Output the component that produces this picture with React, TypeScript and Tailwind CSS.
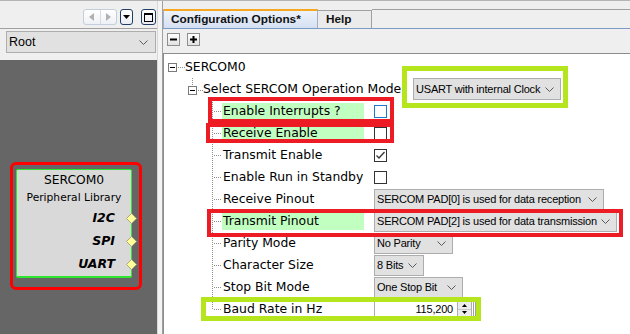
import React from "react";

const DD = "font-['Liberation_Sans',Arial,sans-serif] text-[11px] tracking-[-0.2px] text-black";

function Chevron() {
  return (
    <svg width="9" height="5" viewBox="0 0 9 5" className="shrink-0">
      <polyline points="0.5,0.5 4.5,4.5 8.5,0.5" fill="none" stroke="#5a5a5a" strokeWidth="1" />
    </svg>
  );
}

function Dropdown({ text, className = "" }: { text: string; className?: string }) {
  return (
    <div
      className={`flex h-[21px] shrink-0 items-center justify-between border border-[#adadad] bg-[#e1e1e1] pl-[2px] pr-[6px] ${DD} ${className}`}
    >
      <span className="whitespace-nowrap">{text}</span>
      <Chevron />
    </div>
  );
}

function Checkbox({ checked, focus }: { checked?: boolean; focus?: boolean }) {
  return (
    <div
      className={`flex h-[13px] w-[13px] shrink-0 items-center justify-center border bg-white ${
        focus ? "border-[#1c79d0]" : "border-[#333333]"
      }`}
    >
      {checked && (
        <svg width="11" height="11" viewBox="0 0 11 11">
          <polyline points="1.5,5.5 4,8 9.5,2" fill="none" stroke="#333333" strokeWidth="1.3" />
        </svg>
      )}
    </div>
  );
}

function LeafGutter({ last }: { last?: boolean }) {
  return (
    <svg width="58" height="22" className="shrink-0">
      <line x1="48.5" y1="0" x2="48.5" y2={last ? 12 : 22} stroke="#8f8f8f" strokeDasharray="1 1" />
      <line x1="50" y1="11.5" x2="58" y2="11.5" stroke="#8f8f8f" strokeDasharray="1 1" />
    </svg>
  );
}

function LeafRow({
  label,
  hl,
  last,
  children,
}: {
  label: string;
  hl?: boolean;
  last?: boolean;
  children?: React.ReactNode;
}) {
  return (
    <div className="flex h-[22px] items-center">
      <LeafGutter last={last} />
      <div className="flex w-[152px] shrink-0 items-center">
        <span
          className={`flex h-[17px] items-center whitespace-nowrap pl-[1px] ${
            hl ? "w-[142px] bg-[#c0ffc0]" : ""
          }`}
        >
          {label}
        </span>
      </div>
      {children}
    </div>
  );
}

function Spinner() {
  return (
    <div className="flex h-[16px] w-[15px] shrink-0 flex-col border border-[#adadad] bg-[#ececec]">
      <div className="flex flex-1 items-center justify-center border-b border-[#c8c8c8]">
        <svg width="5" height="3" viewBox="0 0 5 3">
          <polygon points="2.5,0 5,3 0,3" fill="#000" />
        </svg>
      </div>
      <div className="flex flex-1 items-center justify-center">
        <svg width="5" height="3" viewBox="0 0 5 3">
          <polygon points="0,0 5,0 2.5,3" fill="#000" />
        </svg>
      </div>
    </div>
  );
}

function Diamond() {
  return (
    <svg width="11" height="11" viewBox="0 0 11 11" className="ml-[11px] mr-[-6px] shrink-0">
      <polygon points="5.5,0.5 10.5,5.5 5.5,10.5 0.5,5.5" fill="#ffff99" stroke="#a8a878" strokeWidth="1" />
    </svg>
  );
}

export default function App() {
  return (
    <div className="relative flex h-[334px] w-[630px] flex-col overflow-hidden bg-[#efefef] font-['DejaVu_Sans',sans-serif] text-[12.4px] text-black">
      <div className="h-[1px] bg-[#b4b4b4]" />
      <div className="flex h-[333px]">
        {/* Left panel */}
        <div className="flex w-[157px] shrink-0 flex-col">
          <div className="flex h-[27px] items-start justify-end bg-[#efefef] pr-[1px] pt-[8px]">
            <div className="mr-[3px] flex h-[16px] w-[34px] rounded-[3px] border border-[#c3cedd] bg-gradient-to-b from-white to-[#eef1f5]">
              <div className="flex flex-1 items-center justify-center border-r border-[#d4dbe5]">
                <svg width="5" height="8" viewBox="0 0 5 8">
                  <polygon points="5,0 5,8 0,4" fill="#b0b0b0" />
                </svg>
              </div>
              <div className="flex flex-1 items-center justify-center">
                <svg width="5" height="8" viewBox="0 0 5 8">
                  <polygon points="0,0 0,8 5,4" fill="#b0b0b0" />
                </svg>
              </div>
            </div>
            <div className="mr-[8px] flex h-[16px] w-[13px] items-center justify-center rounded-[3px] border border-[#1f3f66] bg-gradient-to-b from-white to-[#e9edf2]">
              <svg width="7" height="4" viewBox="0 0 7 4">
                <polygon points="0,0 7,0 3.5,4" fill="#000" />
              </svg>
            </div>
            <div className="flex h-[16px] w-[15px] items-center justify-center rounded-[3px] border border-[#1f3f66] bg-gradient-to-b from-white to-[#e9edf2]">
              <svg width="9" height="9" viewBox="0 0 9 9">
                <rect x="0.5" y="0.5" width="8" height="8" fill="none" stroke="#000" strokeWidth="1" />
                <line x1="0" y1="1.5" x2="9" y2="1.5" stroke="#000" strokeWidth="1" />
              </svg>
            </div>
          </div>
          <div className="h-[1px] bg-[#a0a0a0]" />
          <div className="h-[31px] bg-[#efefef] pl-[6px] pr-[1px] pt-[2px]">
            <div className="flex h-[22px] items-center justify-between border border-[#adadad] bg-[#e1e1e1] pl-[2px] pr-[7px] font-['Liberation_Sans',Arial,sans-serif] text-[12.5px]">
              <span>Root</span>
              <Chevron />
            </div>
          </div>
          <div className="flex-1 bg-[#666666] pl-[10px] pt-[102px]">
            <div className="h-[128px] w-[132px] rounded-[6px] border-[3px] border-[#ff0000] pl-[3px] pt-[4px]">
              <div className="flex h-[109px] w-[116px] flex-col rounded-[2px] border border-b-2 border-[#2ee62e] bg-[#d9d9d9]">
                <div className="flex h-[20px] items-center justify-center text-[12.3px]">SERCOM0</div>
                <div className="flex h-[17px] items-center justify-center text-[10.7px]">Peripheral Library</div>
                {["I2C", "SPI", "UART"].map((p) => (
                  <div key={p} className="flex h-[23px] items-center justify-end">
                    <span className="text-[12.5px] font-bold italic">{p}</span>
                    <Diamond />
                  </div>
                ))}
              </div>
            </div>
          </div>
        </div>

        {/* Splitter */}
        <div className="w-[6px] shrink-0 border-l border-r border-l-[#d8d8d8] border-r-[#a0a0a0] bg-[#f4f4f4]" />

        {/* Right panel */}
        <div className="flex min-w-0 flex-1 flex-col">
          <div className="h-[8px] bg-[#efefef]" />
          <div className="flex h-[19px] bg-[#efefef]">
            <div className="flex w-[155px] shrink-0 items-center border-x border-t-2 border-x-[#9fb0c8] border-t-[#f7a823] bg-gradient-to-b from-[#eef3fb] to-[#d4e0f2] pl-[7px] font-['Liberation_Sans',Arial,sans-serif] text-[11.8px] font-bold text-[#111]">
              Configuration Options*
            </div>
            <div className="mt-[1px] flex w-[54px] shrink-0 items-center border-r border-t border-[#a0a0a0] bg-[#ebebeb] pl-[8px] font-['Liberation_Sans',Arial,sans-serif] text-[11.8px] font-bold text-[#111]">
              Help
            </div>
            <div className="flex-1 border-t border-[#a0a0a0]" />
          </div>
          <div className="h-[1px] bg-[#7a9cc6]" />
          <div className="flex h-[24px] items-start gap-[7px] bg-[#efefef] pl-[4px] pt-[4px]">
            <div className="flex h-[13px] w-[13px] items-center justify-center border border-[#8e8e8e] bg-gradient-to-b from-white to-[#e2e2e2]">
              <svg width="7" height="7" viewBox="0 0 7 7">
                <rect x="0" y="2.5" width="7" height="2" fill="#000" />
              </svg>
            </div>
            <div className="flex h-[13px] w-[13px] items-center justify-center border border-[#8e8e8e] bg-gradient-to-b from-white to-[#e2e2e2]">
              <svg width="7" height="7" viewBox="0 0 7 7">
                <rect x="0" y="2.5" width="7" height="2" fill="#000" />
                <rect x="2.5" y="0" width="2" height="7" fill="#000" />
              </svg>
            </div>
          </div>
          <div className="flex-1 border-l border-t border-[#8c8c8c] bg-white pt-[2px]">
            {/* SERCOM0 */}
            <div className="flex h-[22px] items-center">
              <svg width="21" height="22" className="shrink-0">
                <rect x="4.5" y="7.5" width="8" height="8" fill="#fff" stroke="#7a7a7a" />
                <line x1="6" y1="11.5" x2="11" y2="11.5" stroke="#000" />
                <line x1="14" y1="11.5" x2="21" y2="11.5" stroke="#8f8f8f" strokeDasharray="1 1" />
              </svg>
              <span className="whitespace-nowrap">SERCOM0</span>
            </div>
            {/* Select mode */}
            <div className="flex h-[22px] items-center">
              <svg width="39" height="22" className="shrink-0">
                <line x1="28.5" y1="0" x2="28.5" y2="8" stroke="#8f8f8f" strokeDasharray="1 1" />
                <rect x="24.5" y="8.5" width="8" height="8" fill="#fff" stroke="#7a7a7a" />
                <line x1="26" y1="12.5" x2="31" y2="12.5" stroke="#000" />
                <line x1="34" y1="12.5" x2="39" y2="12.5" stroke="#8f8f8f" strokeDasharray="1 1" />
              </svg>
              <span className="w-[210px] shrink-0 whitespace-nowrap">Select SERCOM Operation Mode</span>
              <Dropdown text="USART with internal Clock" className="h-[22px] w-[148px]" />
            </div>
            <LeafRow label="Enable Interrupts ?" hl>
              <Checkbox focus />
            </LeafRow>
            <LeafRow label="Receive Enable" hl>
              <Checkbox />
            </LeafRow>
            <LeafRow label="Transmit Enable">
              <Checkbox checked />
            </LeafRow>
            <LeafRow label="Enable Run in Standby">
              <Checkbox />
            </LeafRow>
            <LeafRow label="Receive Pinout">
              <Dropdown text="SERCOM PAD[0] is used for data reception" className="w-[230px]" />
            </LeafRow>
            <LeafRow label="Transmit Pinout" hl>
              <Dropdown text="SERCOM PAD[2] is used for data transmission" className="w-[243px]" />
            </LeafRow>
            <LeafRow label="Parity Mode">
              <Dropdown text="No Parity" className="w-[79px]" />
            </LeafRow>
            <LeafRow label="Character Size">
              <Dropdown text="8 Bits" className="w-[50px]" />
            </LeafRow>
            <LeafRow label="Stop Bit Mode">
              <Dropdown text="One Stop Bit" className="w-[89px]" />
            </LeafRow>
            <LeafRow label="Baud Rate in Hz" last>
              <div
                className={`flex h-[20px] w-[83px] shrink-0 items-center justify-end border-l border-[#adadad] bg-white pr-[4px] ${DD}`}
              >
                115,200
              </div>
              <Spinner />
              <div className="ml-[1px] h-[20px] w-[3px] shrink-0 border-x border-[#a0a0a0]" />
            </LeafRow>
          </div>
        </div>
      </div>

      {/* Annotation overlays */}
      <div className="pointer-events-none absolute left-[208px] top-[97px] h-[26px] w-[186px] border-4 border-[#ed1c24]" />
      <div className="pointer-events-none absolute left-[206px] top-[123px] h-[20px] w-[188px] border-4 border-[#ed1c24]" />
      <div className="pointer-events-none absolute left-[207px] top-[209px] h-[28px] w-[416px] border-4 border-[#ed1c24]" />
      <div className="pointer-events-none absolute left-[402px] top-[66px] h-[42px] w-[166px] border-[5px] border-[#b5e61d]" />
      <div className="pointer-events-none absolute left-[201px] top-[297px] h-[24px] w-[280px] border-[5px] border-[#b5e61d]" />
    </div>
  );
}
